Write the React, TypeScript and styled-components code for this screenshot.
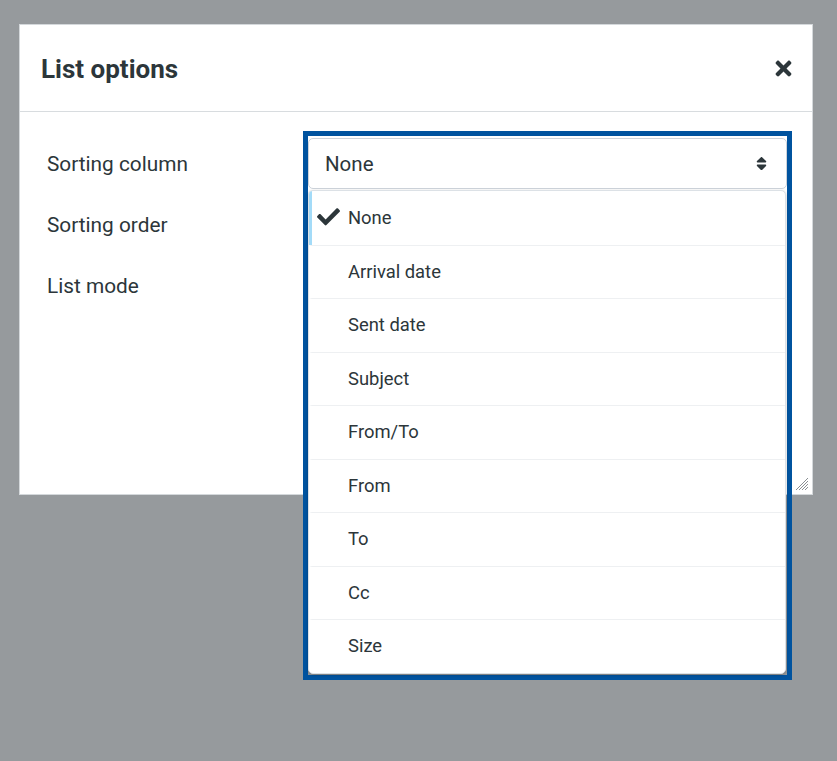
import React from "react";
import styled, { createGlobalStyle } from "styled-components";
import { FaCheck, FaSort, FaTimes } from "react-icons/fa";

const Global = createGlobalStyle`
  html, body { margin: 0; padding: 0; }
  body {
    background: #969a9d;
    font-family: Roboto, "Liberation Sans", Arial, sans-serif;
    color: #2c363a;
  }
`;

const Page = styled.div`
  width: 837px;
  height: 761px;
  overflow: hidden;
  padding: 24px 0 0 19px;
  box-sizing: border-box;
`;

const Dialog = styled.div`
  position: relative;
  width: 794px;
  height: 471px;
  box-sizing: border-box;
  background: #fff;
  border: 1px solid #d4d8db;
  display: flex;
  flex-direction: column;
`;

const Header = styled.div`
  height: 87px;
  flex: none;
  border-bottom: 1px solid #d8dcdf;
  display: flex;
  align-items: center;
  justify-content: space-between;
  padding: 1px 17px 0 21px;
  box-sizing: border-box;
`;

const Title = styled.h1`
  margin: 0;
  font-size: 26px;
  font-weight: 700;
  color: #2c363a;
`;

const CloseButton = styled.button`
  border: 0;
  background: none;
  padding: 0;
  color: #2c363a;
  display: flex;
  align-items: center;
  cursor: pointer;
`;

const Body = styled.div`
  padding: 21px 25px 0 27px;
  display: flex;
  flex-direction: column;
`;

const FormRow = styled.div`
  display: grid;
  grid-template-columns: 261px 1fr;
  align-items: center;
  height: 61px;
`;

const Label = styled.label`
  font-size: 20.8px;
  color: #2c363a;
`;

const Control = styled.div`
  position: relative;
  height: 51px;
`;

const Popup = styled.div`
  position: absolute;
  top: -7px;
  left: -5px;
  right: -5px;
  border: 5px solid #00539f;
  padding: 2px 0 1px;
  z-index: 5;
`;

const SelectBox = styled.div`
  height: 51px;
  box-sizing: border-box;
  border: 1px solid #cdd3da;
  border-radius: 5px;
  background: #fff;
  display: flex;
  align-items: center;
  justify-content: space-between;
  padding: 0 16px 0 16px;
  font-size: 20.5px;
  color: #2c363a;
`;

const Menu = styled.ul`
  list-style: none;
  margin: 1px 1px 0 0;
  padding: 0;
  background: #fff;
  border: 1px solid #dce1e6;
  border-radius: 5px;
  box-shadow: 0 1px 3px rgba(0, 0, 0, 0.25);
  overflow: hidden;
`;

const Item = styled.li<{ $selected?: boolean }>`
  position: relative;
  height: 53.5px;
  box-sizing: border-box;
  display: flex;
  align-items: center;
  padding-left: 36px;
  padding-bottom: 1px;
  font-size: 18.4px;
  color: #2c363a;
  border-left: 3px solid ${(p) => (p.$selected ? "#a3dbf8" : "transparent")};
  & + & {
    border-top: 1px solid #eef0f2;
  }
`;

const CheckMark = styled.span`
  position: absolute;
  left: 5px;
  top: 50%;
  transform: translateY(-55%);
  display: flex;
  color: #2c363a;
`;

const ResizeHandle = styled.svg`
  position: absolute;
  right: 3px;
  bottom: 3px;
`;

const options = [
  "None",
  "Arrival date",
  "Sent date",
  "Subject",
  "From/To",
  "From",
  "To",
  "Cc",
  "Size",
];

export default function App() {
  return (
    <>
      <Global />
      <Page>
        <Dialog>
          <Header>
            <Title>List options</Title>
            <CloseButton aria-label="Close">
              <FaTimes size={23} />
            </CloseButton>
          </Header>
          <Body>
            <FormRow>
              <Label>Sorting column</Label>
              <Control>
                <Popup>
                  <SelectBox>
                    <span>None</span>
                    <FaSort size={17} />
                  </SelectBox>
                  <Menu>
                    {options.map((o, i) => (
                      <Item key={o} $selected={i === 0}>
                        {i === 0 && (
                          <CheckMark>
                            <FaCheck size={23} />
                          </CheckMark>
                        )}
                        {o}
                      </Item>
                    ))}
                  </Menu>
                </Popup>
              </Control>
            </FormRow>
            <FormRow>
              <Label>Sorting order</Label>
              <Control />
            </FormRow>
            <FormRow>
              <Label>List mode</Label>
              <Control />
            </FormRow>
          </Body>
          <ResizeHandle width="14" height="14" viewBox="0 0 14 14">
            <g stroke="#8a8f93" strokeWidth="1">
              <line x1="13" y1="1" x2="1" y2="13" />
              <line x1="13" y1="4" x2="4" y2="13" />
              <line x1="13" y1="7" x2="7" y2="13" />
              <line x1="13" y1="10" x2="10" y2="13" />
            </g>
          </ResizeHandle>
        </Dialog>
      </Page>
    </>
  );
}
